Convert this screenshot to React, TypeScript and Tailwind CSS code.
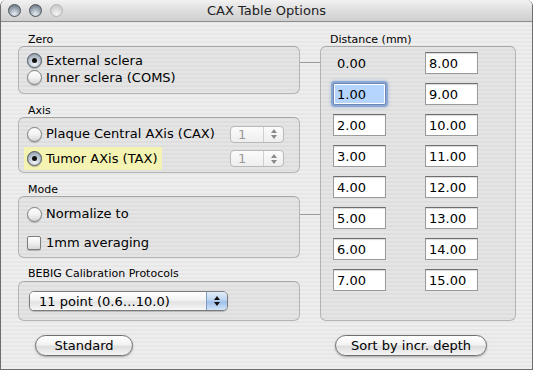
import React from "react";

const distances = [
  ["0.00", "8.00"],
  ["1.00", "9.00"],
  ["2.00", "10.00"],
  ["3.00", "11.00"],
  ["4.00", "12.00"],
  ["5.00", "13.00"],
  ["6.00", "14.00"],
  ["7.00", "15.00"],
];

function Radio({ checked }: { checked?: boolean }) {
  return (
    <span
      className={
        checked
          ? "flex h-[15px] w-[15px] shrink-0 items-center justify-center rounded-full border border-[#4f5862] bg-[radial-gradient(circle_at_50%_75%,#f4f7fa_0%,#b7c2cf_55%,#7d8896_100%)] shadow-[0_1px_1px_rgba(0,0,0,0.25)]"
          : "flex h-[15px] w-[15px] shrink-0 items-center justify-center rounded-full border border-[#7d7d7d] bg-[linear-gradient(#ffffff,#f2f2f2_50%,#d6d6d6)] shadow-[0_1px_1px_rgba(0,0,0,0.2)]"
      }
    >
      {checked && <span className="h-[5px] w-[5px] rounded-full bg-[#111]" />}
    </span>
  );
}

function Stepper() {
  return (
    <div className="flex h-[17px] w-[54px] rounded-[4px] border border-[#b9b9b9] bg-[linear-gradient(#fbfbfb,#eeeeee)] text-[13px] leading-none text-[#9a9a9a]">
      <div className="flex flex-1 items-center pl-[7px]">1</div>
      <div className="flex w-[20px] flex-col items-center justify-center gap-[2px] border-l border-[#cfcfcf]">
        <span className="h-0 w-0 border-x-[3px] border-b-[4px] border-x-transparent border-b-[#8a8a8a]" />
        <span className="h-0 w-0 border-x-[3px] border-t-[4px] border-x-transparent border-t-[#8a8a8a]" />
      </div>
    </div>
  );
}

function Field({ value, focused }: { value: string; focused?: boolean }) {
  if (focused) {
    return (
      <div className="h-[22px] w-[53px] rounded-[2px] border border-[#6c87b4] bg-white p-[1px] shadow-[0_0_0_2px_rgba(120,155,210,0.75),0_0_3px_3px_rgba(120,155,210,0.35)]">
        <div className="flex h-full items-center bg-[#b5d5ff] pl-[2px] text-[13px] leading-none">{value}</div>
      </div>
    );
  }
  return (
    <div className="flex h-[22px] w-[53px] items-center border border-[#9a9a9a] border-t-[#6e6e6e] bg-white pl-[3px] text-[13px] leading-none shadow-[inset_0_1px_1px_rgba(0,0,0,0.15)]">
      {value}
    </div>
  );
}

function Group({ className, children }: { className: string; children?: React.ReactNode }) {
  return (
    <div className={"rounded-[6px] border border-[#b4b4b4] border-t-[#a6a6a6] bg-[rgba(0,0,0,0.035)] " + className}>
      {children}
    </div>
  );
}

function Label({ text }: { text: string }) {
  return <div className="flex h-[14px] items-center pl-[10px] text-[11px] leading-none">{text}</div>;
}

function AquaButton({ text, width }: { text: string; width: string }) {
  return (
    <div
      className={
        "flex h-[21px] items-center justify-center rounded-full border border-[#6f6f6f] bg-[linear-gradient(#ffffff,#f3f3f3_45%,#dedede_55%,#f4f4f4)] text-[13px] leading-none shadow-[0_1px_2px_rgba(0,0,0,0.3)] " +
        width
      }
    >
      {text}
    </div>
  );
}

function Light({ dim }: { dim?: boolean }) {
  return (
    <span
      className={
        dim
          ? "h-[13px] w-[13px] rounded-full border border-[#b3b3b3] bg-[radial-gradient(circle_at_50%_80%,#f5f5f5,#d4d4d4_60%,#c2c2c2)]"
          : "h-[13px] w-[13px] rounded-full border border-[#4d545c] bg-[radial-gradient(circle_at_50%_80%,#e6ecf2,#98a3af_55%,#5d6670)]"
      }
    />
  );
}

export default function App() {
  return (
    <div className="flex h-[370px] w-[533px] flex-col overflow-hidden rounded-t-[6px] border-x border-b border-[#6d6d6d] font-['DejaVu_Sans','Liberation_Sans',sans-serif] text-black">
      {/* title bar */}
      <div className="relative flex h-[22px] shrink-0 items-center border-b border-[#8d8d8d] bg-[linear-gradient(#f2f2f2,#dedede_50%,#cfcfcf)]">
        <div className="flex gap-[8px] pl-[7px]">
          <Light />
          <Light />
          <Light dim />
        </div>
        <div className="absolute inset-0 flex items-center justify-center text-[13px] leading-none text-[#222]">
          CAX Table Options
        </div>
      </div>

      {/* body */}
      <div className="flex flex-1 flex-col bg-[repeating-linear-gradient(0deg,#eeeeee_0px,#eeeeee_2px,#e7e7e7_2px,#e7e7e7_4px)]">
        <div className="flex pl-[17px] pt-[10px]">
          {/* left column */}
          <div className="flex w-[282px] flex-col">
            <Label text="Zero" />
            <Group className="flex h-[48px] flex-col pl-[8px] pt-[5px]">
              <div className="flex h-[17px] items-center gap-[4px] text-[13px]">
                <Radio checked />
                <span>External sclera</span>
              </div>
              <div className="flex h-[17px] items-center gap-[4px] text-[13px]">
                <Radio />
                <span>Inner sclera (COMS)</span>
              </div>
            </Group>

            <div className="mt-[9px]">
              <Label text="Axis" />
            </div>
            <Group className="flex h-[56px] flex-col gap-[2px] pl-[5px] pr-[15px] pt-[5px]">
              <div className="flex h-[22px] items-center justify-between">
                <div className="flex items-center gap-[4px] pl-[3px] text-[13px]">
                  <Radio />
                  <span>Plaque Central AXis (CAX)</span>
                </div>
                <Stepper />
              </div>
              <div className="flex h-[23px] items-center justify-between">
                <div className="flex h-[23px] w-[138px] items-center gap-[4px] bg-[#f4f3b2] pl-[3px] text-[13px]">
                  <Radio checked />
                  <span>Tumor AXis (TAX)</span>
                </div>
                <Stepper />
              </div>
            </Group>

            <div className="mt-[9px]">
              <Label text="Mode" />
            </div>
            <Group className="flex h-[62px] flex-col gap-[9px] pl-[8px] pt-[7px]">
              <div className="flex h-[20px] items-center gap-[4px] text-[13px]">
                <Radio />
                <span>Normalize to</span>
              </div>
              <div className="flex h-[20px] items-center gap-[5px] text-[13px]">
                <span className="h-[14px] w-[14px] rounded-[2px] border border-[#7d7d7d] bg-[linear-gradient(#ffffff,#f0f0f0_50%,#d8d8d8)] shadow-[0_1px_1px_rgba(0,0,0,0.2)]" />
                <span>1mm averaging</span>
              </div>
            </Group>

            <div className="mt-[8px]">
              <div className="flex h-[15px] items-center pl-[10px] text-[11px] leading-none">BEBIG Calibration Protocols</div>
            </div>
            <Group className="h-[40px] pl-[10px] pt-[9px]">
              <div className="flex h-[20px] w-[199px] overflow-hidden rounded-[5px] border border-[#7a7a7a] shadow-[0_1px_1px_rgba(0,0,0,0.2)]">
                <div className="flex flex-1 items-center bg-[linear-gradient(#ffffff,#f3f3f3_45%,#e2e2e2_55%,#f7f7f7)] pl-[9px] text-[13px] leading-none">
                  11 point (0.6…10.0)
                </div>
                <div className="flex w-[21px] flex-col items-center justify-center gap-[2px] border-l border-[#7f9cc4] bg-[linear-gradient(#e3eefa,#bcd4f0_45%,#9dbfea_55%,#d3e5f9)]">
                  <span className="h-0 w-0 border-x-[3px] border-b-[4px] border-x-transparent border-b-[#111]" />
                  <span className="h-0 w-0 border-x-[3px] border-t-[4px] border-x-transparent border-t-[#111]" />
                </div>
              </div>
            </Group>
          </div>

          {/* connector lines */}
          <div className="flex w-[20px] flex-col">
            <div className="mt-[30px] h-px bg-[#9c9c9c]" />
            <div className="mt-[151px] h-px bg-[#9c9c9c]" />
          </div>

          {/* right column */}
          <div className="flex w-[196px] flex-col">
            <Label text="Distance (mm)" />
            <Group className="h-[275px] pl-[12px] pt-[5px]">
              <div className="grid grid-cols-[53px_53px] gap-x-[39px] gap-y-[9px]">
                {distances.map(([a, b], i) => (
                  <React.Fragment key={a}>
                    {i === 0 ? (
                      <div className="flex h-[22px] w-[53px] items-center pl-[4px] text-[13px] leading-none">{a}</div>
                    ) : (
                      <Field value={a} focused={i === 1} />
                    )}
                    <Field value={b} />
                  </React.Fragment>
                ))}
              </div>
            </Group>
          </div>
        </div>

        {/* buttons */}
        <div className="mt-[14px] flex justify-between pl-[34px] pr-[45px]">
          <AquaButton text="Standard" width="w-[98px]" />
          <AquaButton text="Sort by incr. depth" width="w-[152px]" />
        </div>
      </div>
    </div>
  );
}
